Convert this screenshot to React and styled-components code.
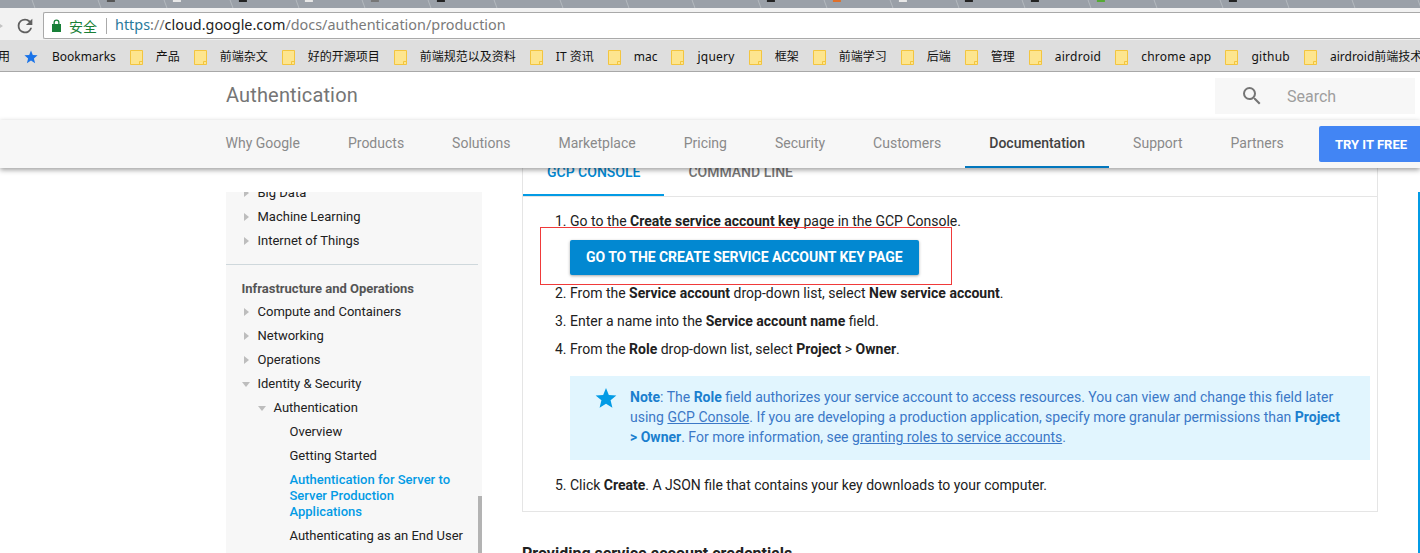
import React from 'react'
import styled, { createGlobalStyle } from 'styled-components'

const GlobalStyle = createGlobalStyle`
  html, body {
    margin: 0;
    padding: 0;
    height: 553px;
    overflow: hidden;
    background: #fff;
    font-family: Roboto, "Noto Sans CJK SC", sans-serif;
  }
`

const Page = styled.div`
  position: relative;
  width: 1420px;
  height: 553px;
  overflow: hidden;
`

// browser chrome
const TabStrip = styled.div`
  display: flex;
  height: 8px;
  margin-left: -32px;
  overflow: hidden;
  background: #9aa0a8;
`
const TabStub = styled.div`
  flex: none;
  width: 66px;
  height: 8px;
  box-sizing: border-box;
  padding-left: 8px;
  border-right: 1px solid #b4b8be;
  transform: skewX(20deg);
`
const TabMark = styled.div`
  width: 8px;
  height: 2px;
  background: ${p => p.$color};
  transform: skewX(-20deg);
`
const Toolbar = styled.div`
  display: flex;
  align-items: stretch;
  height: 32px;
  background: #f2f2f2;
  box-sizing: border-box;
  padding: 4px 0 1px 0;
`
const BackStub = styled.div`
  width: 14px;
  display: flex;
  align-items: center;
`
const ReloadWrap = styled.div`
  width: 29px;
  display: flex;
  align-items: center;
`
const UrlBox = styled.div`
  flex: 1;
  display: flex;
  align-items: center;
  background: #fff;
  border: 1px solid #a9a9a9;
  border-right: none;
  border-radius: 2px 0 0 2px;
  padding-left: 8px;
`
const SecureLabel = styled.span`
  margin-left: 8px;
  padding-right: 9px;
  border-right: 1px solid #aaa;
  font: 14px/16px "Noto Sans CJK SC", sans-serif;
  color: #1a7f37;
`
const Url = styled.span`
  margin: 0 0 2px 8px;
  font: 14.4px/20px "Noto Sans", sans-serif;
  color: #7a7a7a;
`
const UrlScheme = styled.span`
  color: #2a7a9b;
`
const UrlHost = styled.span`
  color: #222;
`
const Bookmarks = styled.div`
  display: flex;
  align-items: center;
  height: 32px;
  box-sizing: border-box;
  padding-top: 3px;
  background: #dedede;
  border-bottom: 1px solid #a8a8a8;
  white-space: nowrap;
  overflow: hidden;
  font: 12px/16px "Noto Sans", "Noto Sans CJK SC", sans-serif;
  color: #111;
`
const AppsLabel = styled.span`
  width: 25px;
  flex: none;
  margin-left: -1px;
  text-indent: -1px;
  overflow: hidden;
`
const BookmarkItem = styled.span`
  display: flex;
  align-items: center;
  flex: none;
  gap: ${p => p.$gap}px;
  margin-right: 14px;
  letter-spacing: ${p => (p.$spaced ? '0.25px' : 'normal')};
`

// site header
const SiteTop = styled.div`
  display: flex;
  align-items: center;
  justify-content: space-between;
  height: 48px;
  padding: 0 5px 0 226px;
  background: #fff;
`
const SiteTitle = styled.div`
  margin-top: -2px;
  font-size: 20px;
  letter-spacing: 0.15px;
  color: #757575;
`
const SearchBox = styled.div`
  display: flex;
  align-items: center;
  gap: 23px;
  width: 200px;
  height: 36px;
  box-sizing: border-box;
  padding-left: 25px;
  background: #f7f7f7;
  font-size: 16px;
  color: #9e9e9e;
`
const Nav = styled.nav`
  position: relative;
  z-index: 2;
  display: flex;
  align-items: stretch;
  height: 48px;
  padding-left: 201.5px;
  background: #f7f7f7;
  box-shadow: 0 2px 5px rgba(0, 0, 0, 0.38);
`
const NavItem = styled.a`
  display: flex;
  align-items: center;
  padding: 0 24px;
  box-sizing: border-box;
  font-size: 14px;
  font-weight: ${p => (p.$active ? 500 : 400)};
  color: ${p => (p.$active ? '#424242' : '#8a8a8a')};
  border-bottom: 2px solid ${p => (p.$active ? '#0277bd' : 'transparent')};
`
const TryButton = styled.a`
  position: absolute;
  top: 6px;
  left: 1319px;
  width: 110px;
  height: 36px;
  box-sizing: border-box;
  padding-left: 16px;
  display: flex;
  align-items: center;
  border-radius: 2px;
  background: #4285f4;
  color: #fff;
  font-size: 13px;
  font-weight: 700;
`

// body
const Main = styled.div`
  display: flex;
  align-items: flex-start;
  padding-left: 226px;
`
const Sidebar = styled.aside`
  position: relative;
  flex: none;
  width: 256px;
  height: 361px;
  margin: 24px 40px 0 0;
  overflow: hidden;
  background: #f7f7f7;
  font-size: 13px;
  color: #212121;
`
const SideList = styled.div`
  margin-top: -11px;
`
const SideRow = styled.div`
  position: relative;
  height: 24px;
  line-height: 24px;
  padding-left: ${p => 31.5 + (p.$level || 0) * 16}px;
  padding-right: 12px;
  color: #212121;
`
const ActiveRow = styled.div`
  padding: 4px 24px 4px 63.5px;
  line-height: 16px;
  color: #039be5;
  font-weight: 500;
`
const Caret = styled.span`
  position: absolute;
  left: ${p => 18 + (p.$level || 0) * 16}px;
  top: ${p => (p.$open ? 10 : 8)}px;
  width: 0;
  height: 0;
  ${p =>
    p.$open
      ? `
    margin-left: -2px;
    border-left: 4px solid transparent;
    border-right: 4px solid transparent;
    border-top: 5px solid #bdbdbd;
  `
      : `
    border-top: 4px solid transparent;
    border-bottom: 4px solid transparent;
    border-left: 5px solid #bdbdbd;
  `}
`
const SideDivider = styled.hr`
  margin: 11px 4px 12px 0;
  border: none;
  border-top: 1px solid #cfd8dc;
`
const SideHeading = styled.div`
  height: 23px;
  line-height: 23px;
  padding-left: 15.5px;
  font-weight: 700;
  color: #555;
`
const SideThumb = styled.div`
  position: absolute;
  right: 0;
  top: 304px;
  width: 4px;
  height: 60px;
  background: #b3b3b3;
`
const Content = styled.div`
  flex: none;
  width: 856px;
`
const Card = styled.section`
  box-sizing: border-box;
  height: 344px;
  border: 1px solid #e5e5e5;
  border-top: none;
  font-size: 14px;
  color: #212121;
`
const TabBar = styled.div`
  display: flex;
  height: 28px;
  border-bottom: 1px solid #e5e5e5;
`
const Tab = styled.div`
  padding: 0 24px;
  height: 28px;
  box-sizing: border-box;
  line-height: 8px;
  font-weight: 500;
  color: ${p => (p.$active ? '#0288d1' : '#757575')};
  border-bottom: 2px solid ${p => (p.$active ? '#039be5' : 'transparent')};
`
const Steps = styled.ol`
  margin: 14px 7px 0 47px;
  padding: 0;
  list-style-position: outside;
  line-height: 20px;
`
const Step = styled.li`
  margin-bottom: 8px;
  padding: 0;
`
const CtaButton = styled.a`
  display: inline-block;
  margin: 9px 0 0;
  padding: 0 16px;
  height: 35px;
  line-height: 35px;
  border-radius: 2px;
  background: #0288d1;
  color: #fff;
  font-weight: 700;
  letter-spacing: -0.05px;
  box-shadow: 0 1px 3px rgba(0, 0, 0, 0.35);
  vertical-align: top;
`
const Note = styled.div`
  display: flex;
  box-sizing: border-box;
  height: 84px;
  margin: 17px 0 15px;
  padding: 11px 24px 0 25px;
  gap: 13px;
  background: #e1f5fe;
  color: #3b78c7;
`
const NoteBody = styled.div`
  flex: 1;
`
const NoteLink = styled.span`
  text-decoration: underline;
`
const NoteStrong = styled.b`
  font-weight: 700;
  color: #1a7fce;
`
const NextHeading = styled.h2`
  margin: 32px 0 0;
  font-size: 16px;
  line-height: 20px;
  font-weight: 700;
  color: #212121;
`
const Annotation = styled.div`
  position: absolute;
  left: 540px;
  top: 227px;
  width: 412px;
  height: 58px;
  box-sizing: border-box;
  border: 1px solid #f03a3a;
  pointer-events: none;
`
const EdgeBar = styled.div`
  position: absolute;
  right: 0;
  top: 192px;
  width: 2px;
  bottom: 0;
  background: #039be5;
`

const Folder = () => (
  <svg width="13" height="15" viewBox="0 0 13 15" style={{ flex: 'none' }}>
    <path d="M.5.5h12v14H.5z" fill="#fde58f" stroke="#f3c53f" />
    <path d="M9.500 14.500v-3h3" fill="none" stroke="#f3c53f" />
  </svg>
)

const Star = ({ size, color }) => (
  <svg width={size} height={size} viewBox="0 0 24 24" style={{ flex: 'none' }}>
    <path
      d="M12 1l3.100 7.600 8.200.6-6.300 5.300 2 8L12 18.200 5 22.500l2-8L.7 9.200l8.200-.6z"
      fill={color}
    />
  </svg>
)

const folders = [
  { name: '产品' },
  { name: '前端杂文' },
  { name: '好的开源项目' },
  { name: '前端规范以及资料' },
  { name: 'IT 资讯' },
  { name: 'mac' },
  { name: 'jquery', spaced: true },
  { name: '框架' },
  { name: '前端学习' },
  { name: '后端' },
  { name: '管理' },
  { name: 'airdroid', spaced: true },
  { name: 'chrome app', spaced: true },
  { name: 'github', spaced: true },
  { name: 'airdroid前端技术' },
]
const navItems = [
  'Why Google', 'Products', 'Solutions', 'Marketplace', 'Pricing', 'Security', 'Customers',
  'Documentation', 'Support', 'Partners',
]
const none = 'transparent'
const tabMarks = [
  none, none, '#555', '#e8e8e8', '#222', '#e8e8e8', '#777', '#222', none, none, none, none,
  '#222', '#e0702a', '#e8e8e8', '#222', '#222', '#5a3', none, '#222', none, none, none,
]

export default function App() {
  return (
    <Page>
      <GlobalStyle />
      <TabStrip>
        {tabMarks.map((color, i) => (
          <TabStub key={i}>
            <TabMark $color={color} />
          </TabStub>
        ))}
      </TabStrip>
      <Toolbar>
        <BackStub>
          <svg width="4" height="10" viewBox="0 0 4 10">
            <path d="M0 3l3 2-3 2z" fill="#c4c4c4" />
          </svg>
        </BackStub>
        <ReloadWrap>
          <svg width="22" height="22" viewBox="0 0 24 24">
            <path
              d="M17.650 6.350A7.960 7.960 0 0 0 12 4a8 8 0 1 0 7.730 10h-2.080A6 6 0 1 1 12 6c1.660 0 3.140.690 4.220 1.780L13 11h7V4z"
              fill="#5f5f5f"
            />
          </svg>
        </ReloadWrap>
        <UrlBox>
          <svg width="9" height="13" viewBox="0 0 9 13">
            <path d="M1.500 5V3.500a3 3 0 0 1 6 0V5H9v8H0V5zm1.300 0h3.400V3.500a1.700 1.700 0 0 0-3.400 0z" fill="#188038" />
          </svg>
          <SecureLabel>安全</SecureLabel>
          <Url>
            <UrlScheme>https</UrlScheme>://<UrlHost>cloud.google.com</UrlHost>/docs/authentication/production
          </Url>
        </UrlBox>
      </Toolbar>
      <Bookmarks>
        <AppsLabel>用</AppsLabel>
        <BookmarkItem $gap={14}>
          <Star size={14} color="#1a73e8" />
          Bookmarks
        </BookmarkItem>
        {folders.map(item => (
          <BookmarkItem key={item.name} $gap={13} $spaced={item.spaced}>
            <Folder />
            {item.name}
          </BookmarkItem>
        ))}
      </Bookmarks>
      <SiteTop>
        <SiteTitle>Authentication</SiteTitle>
        <SearchBox>
          <svg width="24" height="24" viewBox="0 0 24 24" style={{ flex: 'none' }}>
            <path
              d="M15.500 14h-.79l-.28-.27A6.470 6.470 0 0 0 16 9.500 6.500 6.500 0 1 0 9.500 16c1.610 0 3.090-.59 4.230-1.570l.27.28v.79l5 4.990L20.490 19l-4.990-5zm-6 0C7.010 14 5 11.990 5 9.500S7.010 5 9.500 5 14 7.010 14 9.500 11.990 14 9.500 14z"
              fill="#757575"
            />
          </svg>
          Search
        </SearchBox>
      </SiteTop>
      <Nav>
        {navItems.map(name => (
          <NavItem key={name} $active={name === 'Documentation'}>{name}</NavItem>
        ))}
        <TryButton>TRY IT FREE</TryButton>
      </Nav>
      <Main>
        <Sidebar>
          <SideList>
            <SideRow><Caret />Big Data</SideRow>
            <SideRow><Caret />Machine Learning</SideRow>
            <SideRow><Caret />Internet of Things</SideRow>
            <SideDivider />
            <SideHeading>Infrastructure and Operations</SideHeading>
            <SideRow><Caret />Compute and Containers</SideRow>
            <SideRow><Caret />Networking</SideRow>
            <SideRow><Caret />Operations</SideRow>
            <SideRow><Caret $open />Identity &amp; Security</SideRow>
            <SideRow $level={1}><Caret $open $level={1} />Authentication</SideRow>
            <SideRow $level={2}>Overview</SideRow>
            <SideRow $level={2}>Getting Started</SideRow>
            <ActiveRow>Authentication for Server to Server Production Applications</ActiveRow>
            <SideRow $level={2}>Authenticating as an End User</SideRow>
          </SideList>
          <SideThumb />
        </Sidebar>
        <Content>
          <Card>
            <TabBar>
              <Tab $active>GCP CONSOLE</Tab>
              <Tab>COMMAND LINE</Tab>
            </TabBar>
            <Steps>
              <Step>
                Go to the <b>Create service account key</b> page in the GCP Console.
                <br />
                <CtaButton>GO TO THE CREATE SERVICE ACCOUNT KEY PAGE</CtaButton>
              </Step>
              <Step>From the <b>Service account</b> drop-down list, select <b>New service account</b>.</Step>
              <Step>Enter a name into the <b>Service account name</b> field.</Step>
              <Step>
                From the <b>Role</b> drop-down list, select <b>Project</b> &gt; <b>Owner</b>.
                <Note>
                  <Star size={22} color="#039be5" />
                  <NoteBody>
                    <NoteStrong>Note</NoteStrong>: The <NoteStrong>Role</NoteStrong> field authorizes your service account to access resources. You can view and change this field later using <NoteLink>GCP Console</NoteLink>. If you are developing a production application, specify more granular permissions than <NoteStrong>Project &gt; Owner</NoteStrong>. For more information, see <NoteLink>granting roles to service accounts</NoteLink>.
                  </NoteBody>
                </Note>
              </Step>
              <Step>Click <b>Create</b>. A JSON file that contains your key downloads to your computer.</Step>
            </Steps>
          </Card>
          <NextHeading>Providing service account credentials</NextHeading>
        </Content>
      </Main>
      <Annotation />
      <EdgeBar />
    </Page>
  )
}
